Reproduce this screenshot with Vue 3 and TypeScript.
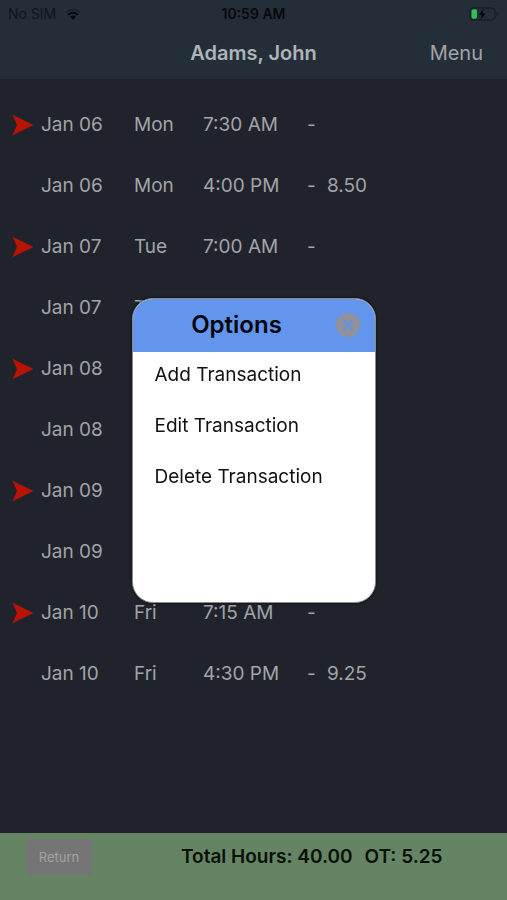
<script setup lang="ts">
import { ref } from 'vue'

interface Punch {
  date: string
  day: string
  time: string
  separator: string
  hours: string
  start: boolean
}

const employee = 'Adams, John'

const punches: Punch[] = [
  { date: 'Jan 06', day: 'Mon', time: '7:30 AM', separator: '-', hours: '', start: true },
  { date: 'Jan 06', day: 'Mon', time: '4:00 PM', separator: '-', hours: '8.50', start: false },
  { date: 'Jan 07', day: 'Tue', time: '7:00 AM', separator: '-', hours: '', start: true },
  { date: 'Jan 07', day: 'Tue', time: '', separator: '', hours: '', start: false },
  { date: 'Jan 08', day: '', time: '', separator: '', hours: '', start: true },
  { date: 'Jan 08', day: '', time: '', separator: '', hours: '', start: false },
  { date: 'Jan 09', day: '', time: '', separator: '', hours: '', start: true },
  { date: 'Jan 09', day: '', time: '', separator: '', hours: '', start: false },
  { date: 'Jan 10', day: 'Fri', time: '7:15 AM', separator: '-', hours: '', start: true },
  { date: 'Jan 10', day: 'Fri', time: '4:30 PM', separator: '-', hours: '9.25', start: false },
]

const options: string[] = ['Add Transaction', 'Edit Transaction', 'Delete Transaction']
const optionsOpen = ref(true)
</script>

<template>
  <div class="screen">
    <header class="top">
      <div class="status">
        <div class="carrier">
          <span>No SIM</span>
          <svg class="wifi" viewBox="0 0 16 12" aria-hidden="true">
            <path d="M1.2 4.3a9.8 9.8 0 0 1 13.6 0" fill="none" stroke="#1a2229" stroke-width="2" />
            <path d="M3.3 6.7a6.7 6.7 0 0 1 9.4 0" fill="none" stroke="#05080a" stroke-width="2" />
            <path d="M8 11.8 5.2 8.9a4 4 0 0 1 5.6 0Z" fill="#05080a" />
          </svg>
        </div>
        <span class="clock">10:59 AM</span>
        <svg class="battery" viewBox="0 0 30 14" aria-hidden="true">
          <rect x="1" y="1" width="25" height="12" rx="3.5" fill="none" stroke="#17202a" stroke-width="1.4" />
          <path d="M27.5 4.5v5c1.2-.4 1.8-1.3 1.8-2.5s-.6-2.1-1.8-2.5Z" fill="#17202a" />
          <rect x="2.5" y="2.2" width="5.5" height="9.6" rx="1.8" fill="#36bf58" />
          <path d="M14.8 1.8 9.6 7.8h3.3l-1.2 4.8 5-6.2h-3.2Z" fill="#030506" />
        </svg>
      </div>
      <div class="title-bar">
        <h1>{{ employee }}</h1>
        <button type="button" class="menu" @click="optionsOpen = true">Menu</button>
      </div>
    </header>

    <main class="content">
      <table class="punches">
        <colgroup>
          <col class="c-mark" />
          <col class="c-date" />
          <col class="c-day" />
          <col class="c-time" />
          <col class="c-dash" />
          <col />
        </colgroup>
        <tbody>
          <tr v-for="(punch, index) in punches" :key="index">
            <td class="mark">
              <svg v-if="punch.start" viewBox="0 0 22 22" aria-hidden="true">
                <path d="M.5.8 21.5 11 .5 21.2 5 11Z" fill="#b81405" />
              </svg>
            </td>
            <td>{{ punch.date }}</td>
            <td>{{ punch.day }}</td>
            <td>{{ punch.time }}</td>
            <td>{{ punch.separator }}</td>
            <td>{{ punch.hours }}</td>
          </tr>
        </tbody>
      </table>
    </main>

    <footer class="totals">
      <button type="button" class="return">Return</button>
      <p class="sum"><span>Total Hours: 40.00</span><span>OT: 5.25</span></p>
    </footer>

    <div v-if="optionsOpen" class="overlay">
      <section class="dialog" role="dialog" aria-modal="true" aria-labelledby="options-title">
        <div class="dialog-head">
          <h2 id="options-title">Options</h2>
          <button type="button" class="close" aria-label="Close" @click="optionsOpen = false">
            <svg viewBox="0 0 24 24" aria-hidden="true">
              <circle cx="12" cy="12" r="12" fill="#91919a" />
              <path d="m8 8 8 8m0-8-8 8" fill="none" stroke="#7093d0" stroke-width="3.4" stroke-linecap="round" />
            </svg>
          </button>
        </div>
        <ul class="choices">
          <li v-for="option in options" :key="option">
            <button type="button">{{ option }}</button>
          </li>
        </ul>
      </section>
    </div>
  </div>
</template>

<style>
body {
  background: #20232b;
}
</style>

<style scoped>
.screen {
  display: flex;
  flex-direction: column;
  min-height: 100vh;
  background: #20232b;
  color: #a2a4a7;
  font-family: Inter, "Liberation Sans", sans-serif;
  font-size: 19px;
  line-height: 24px;
}

button {
  margin: 0;
  padding: 0;
  border: 0;
  background: none;
  color: inherit;
  font: inherit;
  cursor: pointer;
}

.top {
  background: #242e39;
}

.status {
  display: grid;
  grid-template-columns: 1fr auto 1fr;
  align-items: center;
  height: 28px;
  padding: 0 8px;
  color: #06090c;
  font-size: 14px;
  line-height: 20px;
}

.carrier {
  display: flex;
  align-items: center;
  gap: 9px;
}

.carrier span {
  color: #10161b;
}

.wifi {
  width: 16px;
  height: 12px;
}

.clock {
  font-weight: 600;
}

.battery {
  justify-self: end;
  width: 30px;
  height: 14px;
}

.title-bar {
  display: grid;
  grid-template-columns: 1fr auto 1fr;
  align-items: center;
  height: 50px;
  padding: 0 24px 1px;
  font-size: 20px;
}

h1 {
  grid-column: 2;
  margin: 0;
  color: #b0b4b8;
  font-size: 20px;
  font-weight: 600;
}

.menu {
  justify-self: end;
}

.content {
  flex: 1;
  padding: 15px 0;
}

.punches {
  width: 100%;
  table-layout: fixed;
  border-collapse: collapse;
}

.c-mark {
  width: 41px;
}

.c-date {
  width: 93px;
}

.c-day {
  width: 69px;
}

.c-time {
  width: 104px;
}

.c-dash {
  width: 20px;
}

.punches td {
  height: 61px;
  padding: 0;
  white-space: nowrap;
}

.punches .mark {
  padding-left: 12px;
}

.mark svg {
  display: block;
  width: 22px;
  height: 22px;
}

.totals {
  display: flex;
  align-items: flex-start;
  gap: 89px;
  height: 61px;
  padding: 6px 26px 0;
  background: #658463;
}

.return {
  width: 66px;
  height: 36px;
  border-radius: 2px;
  background: #757575;
  color: #a3a3a3;
  font-size: 13px;
}

.sum {
  display: flex;
  gap: 12px;
  margin: 0;
  padding: 6px 0;
  color: #071006;
  font-weight: 600;
  white-space: nowrap;
}

.overlay {
  position: fixed;
  inset: 0;
  display: grid;
  place-items: center;
}

.dialog {
  box-sizing: border-box;
  width: 244px;
  min-height: 305px;
  overflow: hidden;
  border: 1px solid #8b8b8b;
  border-radius: 21px;
  background: #fefefe;
  color: #111;
  box-shadow: 0 0 3px #0b0c0e;
}

.dialog-head {
  display: flex;
  align-items: center;
  height: 53px;
  padding: 0 15px 0 5px;
  background: #6495ed;
}

h2 {
  flex: 1;
  margin: 0;
  color: #03060c;
  font-size: 24px;
  font-weight: 600;
  line-height: 30px;
  text-align: center;
}

.close {
  width: 24px;
  height: 24px;
}

.close svg {
  display: block;
}

.choices {
  margin: 0;
  padding: 11px 22px;
  list-style: none;
}

.choices li + li {
  margin-top: 27px;
}

.choices button {
  display: block;
  white-space: nowrap;
}
</style>
